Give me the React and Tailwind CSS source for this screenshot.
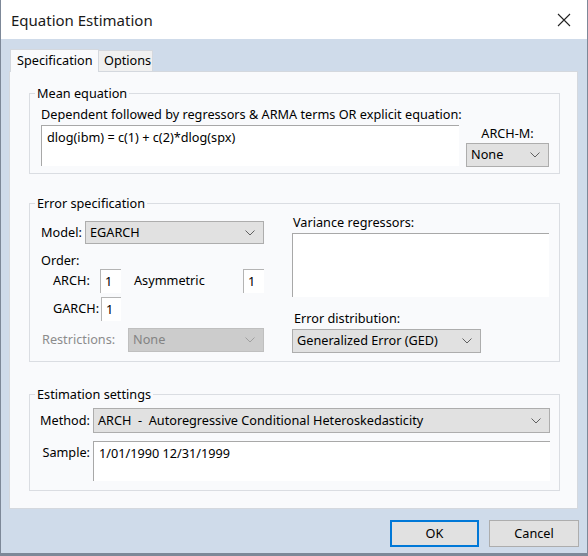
import React from 'react'

const font = "font-['Noto_Sans',sans-serif]"

function Chevron({ color = '#606060' }) {
  return (
    <svg width="10" height="6" viewBox="0 0 10 6" className="shrink-0">
      <polyline points="0.5,0.5 5,5 9.5,0.5" fill="none" stroke={color} strokeWidth="1" />
    </svg>
  )
}

function Dropdown({ value, width, height = 'h-[24px]', disabled }) {
  return (
    <div
      className={`flex items-center justify-between pl-[4px] pr-[8px] border ${height} ${width} ${
        disabled ? 'bg-[#cccccc] border-[#bfbfbf] text-[#838383]' : 'bg-[#e1e1e1] border-[#adadad] text-black'
      }`}
    >
      <span className="whitespace-pre">{value}</span>
      <Chevron color={disabled ? '#a0a0a0' : '#606060'} />
    </div>
  )
}

function NumBox({ value, width = 'w-[21px]' }) {
  return (
    <div className={`h-[24px] ${width} bg-white border-l border-t border-[#b4b4b4] pl-[4px] flex items-center`}>
      {value}
    </div>
  )
}

function Group({ title, className, inner, children }) {
  return (
    <fieldset className={`border border-[#dadde2] ${className}`}>
      <legend className="ml-[5px] px-[2px] leading-[16px] text-black">{title}</legend>
      <div className={inner}>{children}</div>
    </fieldset>
  )
}

export default function App() {
  return (
    <div className={`${font} text-[12.7px] text-black w-[588px] h-[556px] bg-[#cfdbea] border-l border-r border-b-[3px] border-[#7d8898] flex flex-col`}>
      {/* Title bar */}
      <div className="h-[39px] bg-white flex items-center justify-between pl-[10px] pr-[16px] shrink-0">
        <span className="text-[15px] leading-[20px] text-[#1a1a1a]">Equation Estimation</span>
        <svg width="14" height="14" viewBox="0 0 14 14">
          <path d="M1 1 L13 13 M13 1 L1 13" stroke="#222" strokeWidth="1.1" fill="none" />
        </svg>
      </div>

      {/* Tabs */}
      <div className="flex items-end h-[32px] pl-[9px] shrink-0">
        <div className="h-[23px] w-[89px] bg-[#f9fafc] border border-b-0 border-[#d4d8de] flex items-center pl-[6px] relative top-[1px]">
          Specification
        </div>
        <div className="h-[21px] w-[54px] bg-[#f0f0f0] border border-l-0 border-b-0 border-[#d4d8de] flex items-center pl-[5px]">
          Options
        </div>
      </div>

      {/* Panel */}
      <div className="ml-[8px] w-[569px] h-[438px] bg-[#f9fafc] border border-[#d4d8de] pl-[19px] pt-[13px] shrink-0">
        <Group title="Mean equation" className="w-[531px]" inner="pl-[11px] pb-[6px]">
          <div className="flex">
            <div className="w-[418px]">
              <div className="whitespace-nowrap leading-[16px] mt-[5px]">
                Dependent followed by regressors &amp; ARMA terms OR explicit equation:
              </div>
              <div className="mt-[3px] h-[41px] bg-white border-l border-t border-[#a8a8a8] pl-[5px] pt-[3px] leading-[16px]">
                dlog(ibm) = c(1) + c(2)*dlog(spx)
              </div>
            </div>
            <div className="ml-[7px] w-[83px] flex flex-col items-center">
              <div className="mt-[24px] leading-[16px]">ARCH-M:</div>
              <div className="mt-[2px]">
                <Dropdown value="None" width="w-[83px]" />
              </div>
            </div>
          </div>
        </Group>

        <Group title="Error specification" className="mt-[21px] w-[531px]" inner="pl-[11px] pb-[8px]">
          <div className="flex">
            <div className="w-[223px] flex flex-col">
              <div className="flex items-center mt-[10px]">
                <span className="w-[44px]">Model:</span>
                <Dropdown value="EGARCH" width="w-[179px]" height="h-[23px]" />
              </div>
              <div className="mt-[8px] leading-[16px]">Order:</div>
              <div className="flex items-center mt-[1px] pl-[12px]">
                <span className="w-[47px]">ARCH:</span>
                <NumBox value="1" />
                <span className="ml-[13px] w-[109px]">Asymmetric</span>
                <NumBox value="1" />
              </div>
              <div className="flex items-center mt-[4px] pl-[12px]">
                <span className="w-[48px]">GARCH:</span>
                <NumBox value="1" width="w-[20px]" />
              </div>
              <div className="flex items-center mt-[7px]">
                <span className="w-[87px] pl-[1px] text-[#8c8c8c]">Restrictions:</span>
                <Dropdown value="None" width="w-[136px]" disabled />
              </div>
            </div>
            <div className="ml-[28px] w-[257px] flex flex-col">
              <div className="mt-[3px] leading-[16px] pl-[1px]">Variance regressors:</div>
              <div className="mt-[3px] h-[64px] bg-white border-l border-t border-[#a8a8a8]" />
              <div className="mt-[13px] leading-[16px] pl-[2px]">Error distribution:</div>
              <div className="mt-[3px]">
                <Dropdown value="Generalized Error (GED)" width="w-[189px]" />
              </div>
            </div>
          </div>
        </Group>

        <Group title="Estimation settings" className="mt-[24px] w-[531px]" inner="pl-[8px] pb-[9px]">
          <div className="flex items-center mt-[6px]">
            <span className="w-[55px] text-right pr-[3px]">Method:</span>
            <Dropdown value="ARCH  -  Autoregressive Conditional Heteroskedasticity" width="w-[457px]" height="h-[25px]" />
          </div>
          <div className="flex mt-[8px]">
            <span className="w-[55px] text-right pr-[3px] pt-[3px] leading-[16px]">Sample:</span>
            <div className="w-[457px] h-[40px] bg-white border-l border-t border-[#a8a8a8] pl-[5px] pt-[3px] leading-[16px]">
              1/01/1990 12/31/1999
            </div>
          </div>
        </Group>
      </div>

      {/* Buttons */}
      <div className="flex justify-end gap-[10px] pr-[8px] mt-[11px]">
        <button className="w-[89px] h-[27px] bg-[#e1e1e1] border-2 border-[#0078d7] text-[12.7px]">OK</button>
        <button className="w-[90px] h-[27px] bg-[#e1e1e1] border border-[#adadad] text-[12.7px]">Cancel</button>
      </div>
    </div>
  )
}
